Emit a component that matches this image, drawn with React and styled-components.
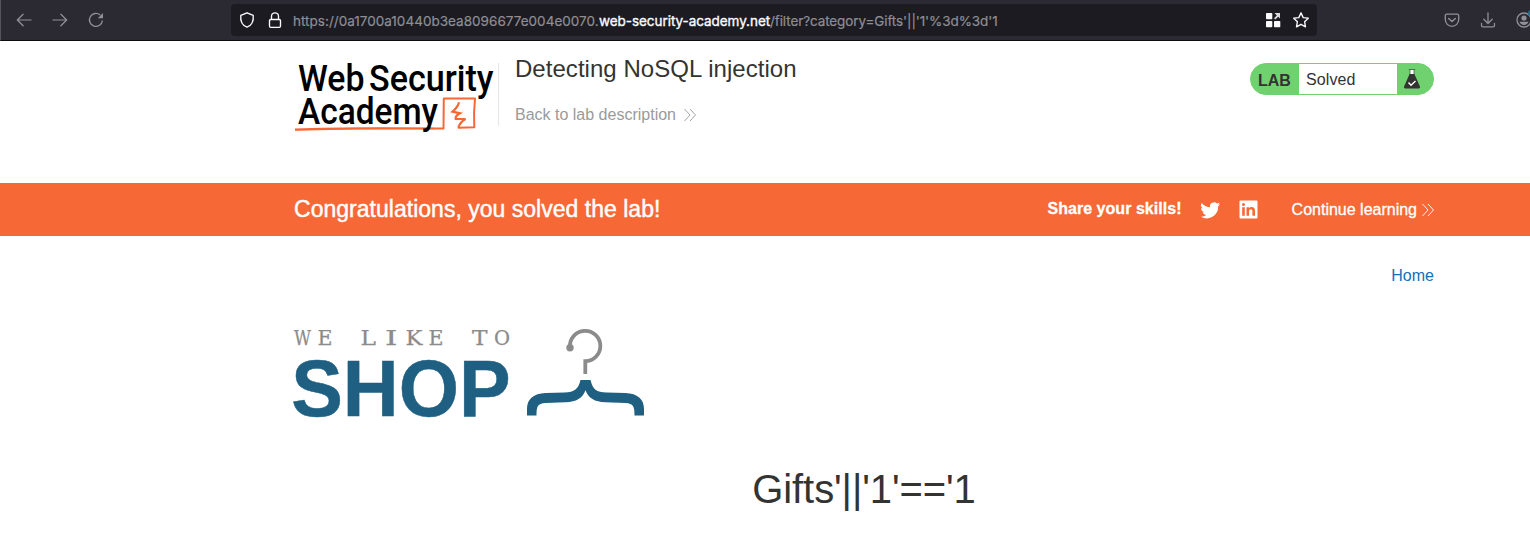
import React from "react";
import styled, { createGlobalStyle } from "styled-components";

const Global = createGlobalStyle`
  * { box-sizing: border-box; }
  body { margin: 0; background: #fff; color: #333332; font: 16px "Liberation Sans", Arial, sans-serif; overflow: hidden; }
  svg { display: block; flex: none; overflow: visible; }
`;

const Page = styled.div`height: 537px; overflow: hidden;`;

const Toolbar = styled.div`
  display: flex;
  align-items: center;
  height: 41px;
  background: #2b2a33;
  border-bottom: 1px solid #0c0c0d;
  border-left: 1px solid #56555c;
  overflow: hidden;
`;
const NavButtons = styled.div`
  display: flex;
  flex: none;
  gap: 20px;
  width: 230px;
  padding-left: 15px;
  color: #919096;
`;
const AddressBar = styled.div`
  display: flex;
  flex: none;
  align-items: center;
  width: 1086px;
  height: 32px;
  padding: 0 8px;
  border-radius: 4px;
  background: #1c1b22;
  color: #fbfbfe;
`;
const AddressIcons = styled.div`
  display: flex;
  gap: ${(p) => p.$gap}px;
`;
const Url = styled.div`
  flex: 1;
  display: flex;
  padding: 1px 0 0 10px;
  font: 13.5px/18px Inter, sans-serif;
  white-space: pre;
  color: #8f8e94;
`;
const UrlPart = styled.span`
  width: ${(p) => p.$width}px;
  letter-spacing: ${(p) => p.$spacing || 0}px;
  color: ${(p) => (p.$host ? "#fbfbfe" : "inherit")};
  -webkit-text-stroke: ${(p) => (p.$host ? "0.35px" : "0.2px")} currentColor;
`;
const Tools = styled.div`
  display: flex;
  flex: none;
  gap: 20px;
  padding-left: 127px;
  color: #919096;
`;

const Container = styled.div`
  width: 1140px;
  margin-left: 294px;
`;
const LabHeader = styled(Container)`
  display: flex;
  height: 142px;
  padding-top: 22px;
`;
const TitleBlock = styled.div`
  flex: 1;
  height: 63px;
  margin-left: 4px;
  padding-left: 16px;
  border-left: 1px solid #e6e6e6;
`;
const Title = styled.h2`
  margin: -9px 0 0;
  font-size: 24px;
  line-height: 30px;
  font-weight: 400;
  letter-spacing: 0.04px;
`;
const BackLink = styled.a`
  display: flex;
  align-items: center;
  gap: 8px;
  margin-top: 21px;
  line-height: 20px;
  color: #9a9a9a;
`;
const Status = styled.div`
  display: flex;
  width: 184px;
  height: 32px;
  border: 1px solid #70d26e;
  border-radius: 16px;
  background: #70d26e;
  line-height: 32px;
  overflow: hidden;
`;
const StatusLabel = styled.b`
  width: 48px;
  padding: 1px 0 0 7px;
`;
const StatusText = styled.span`
  width: 98px;
  padding-left: 7px;
  letter-spacing: 0.1px;
  background: #fff;
`;
const StatusIcon = styled.span`padding: 4px 0 0 6px;`;

const Banner = styled.div`
  height: 53px;
  background: #f66836;
  color: #fff;
`;
const BannerRow = styled(Container)`
  display: flex;
  align-items: center;
  height: 53px;
`;
const Congrats = styled.h4`
  flex: 1;
  margin: 0;
  font-size: 23px;
  font-weight: 400;
  letter-spacing: 0.02px;
  -webkit-text-stroke: 0.45px #fff;
`;
const Share = styled.b`
  margin-right: 18px;
  padding-bottom: 2px;
  letter-spacing: 0.04px;
  -webkit-text-stroke: 0.3px #fff;
`;
const Social = styled.div`
  display: flex;
  gap: 18px;
  margin-right: 34px;
`;
const Continue = styled.a`
  display: flex;
  align-items: center;
  gap: 5px;
  -webkit-text-stroke: 0.3px #fff;
`;
const TopLinks = styled(Container)`
  display: flex;
  justify-content: flex-end;
  height: 90px;
  padding-top: 30px;
  line-height: 20px;
  color: #1470b8;
`;
const Category = styled.h1`
  margin: 38px 0 0;
  text-align: center;
  font-size: 40px;
  line-height: 50px;
  font-weight: 400;
  letter-spacing: -0.09px;
`;

const Line = ({ children, size = 18, w = 1.4 }) => (
  <svg width={size} height={size} viewBox="0 0 18 18" fill="none" stroke="currentColor" strokeWidth={w} strokeLinecap="round" strokeLinejoin="round">
    {children}
  </svg>
);

const Chevrons = () => (
  <svg width="12" height="14" viewBox="0 0 12 14" fill="none" stroke="currentColor" strokeWidth="0.9">
    <path d="M.5 1 6 7 .5 13M6 1l5.500 6L6 13" />
  </svg>
);

const AcademyLogo = () => (
  <svg width="200" height="70" viewBox="0 0 200 70">
    <g fill="none" stroke="#f66836">
      <path d="M1 66.500C35 65 95 65 149.500 65.500L149.800 35.500 181 35.500Q179.500 50 180.300 64.300L164 64.700" strokeWidth="2" strokeLinejoin="round" />
      <path d="M1 67 60 65.600 140 65.500" strokeWidth="1.600" />
      <path d="M165 39.300Q164 44 158.500 48.700L166 50.300Q161 53 161.700 56H171.500Q166 59 164.300 64.700" strokeWidth="2.200" />
    </g>
    <g fontFamily="Roboto" fontWeight="500" fontSize="36.500" fill="#000">
      <text x="4" y="28.300" textLength="66.500" lengthAdjust="spacingAndGlyphs">Web</text>
      <text x="75" y="28.300" textLength="124.500" lengthAdjust="spacingAndGlyphs">Security</text>
      <text x="4" y="61" textLength="140" lengthAdjust="spacingAndGlyphs">Academy</text>
    </g>
  </svg>
);

/* Tagline letters: glyph, left edge, advance width */
const TAGLINE = [
  ["W", 0, 17], ["E", 23.5, 15], ["L", 66.5, 15.5], ["I", 91, 12.5],
  ["K", 111.5, 17], ["E", 134.5, 15], ["T", 178, 15.5], ["O", 200, 16],
];

const ShopLogo = () => (
  <svg width="352" height="100" viewBox="0 0 352 100">
    <g fontFamily="'DejaVu Serif', 'Liberation Serif', serif" fontSize="20.500" fill="#8b8b8b" stroke="#8b8b8b" strokeWidth=".25">
      {TAGLINE.map(([glyph, x, width]) => (
        <text key={x} x={x} y="19" textLength={width} lengthAdjust="spacingAndGlyphs">{glyph}</text>
      ))}
    </g>
    <text x="-2.800" y="89.500" fontFamily="Liberation Sans" fontWeight="700" fontSize="80.500" fill="#1f5f82" stroke="#1f5f82" strokeWidth=".5" textLength="219.500" lengthAdjust="spacingAndGlyphs">SHOP</text>
    <circle cx="276" cy="21.800" r="3.700" fill="#8b8b8b" />
    <path d="M276 21.500A15.200 15.200 0 1 1 291.300 35.200V48" fill="none" stroke="#8b8b8b" strokeWidth="3.800" />
    <path d="M286.500 54h10c2 9 6 12.500 16 12.500l19 .6c12 .5 18.500 6 18.500 16V89.500h-9.500c0-9-1-12-9-12.500l-20-.7c-11-.4-17-4-20-12-3 8-9 11.600-20 12l-20 .7c-8 .5-9 3.500-9 12.500H233V83c0-10 6.500-15.500 18.500-16l19-.6c10 0 14-3.500 16-12.400Z" fill="#1f5f82" />
  </svg>
);

export default function App() {
  return (
    <Page>
      <Global />
      <Toolbar>
        <NavButtons>
          <Line size={16}><path d="M17 9H2M8 2.500 1.500 9 8 15.500" /></Line>
          <Line size={16}><path d="M1 9h15M10 2.500 16.500 9 10 15.500" /></Line>
          <svg width="16" height="16" viewBox="0 0 16 16" fill="none" stroke="currentColor" strokeWidth="1.300">
            <path d="M12.200 3A6.500 6.500 0 1 0 14.400 8.500" />
            <path d="M15 1v5.200H9.800Z" fill="currentColor" stroke="none" />
          </svg>
        </NavButtons>
        <AddressBar>
          <AddressIcons $gap={12}>
            <svg width="16" height="16" viewBox="0 0 16 16" fill="none" stroke="currentColor" strokeWidth="1.350" strokeLinejoin="round">
              <path d="M8 .8 14.200 3.400C14.800 9 12.500 13.500 8 15.200 3.500 13.500 1.200 9 1.800 3.400Z" />
            </svg>
            <svg width="16" height="16" viewBox="0 0 16 16" fill="none" stroke="currentColor" strokeWidth="1.350">
              <rect x="2.500" y="7.500" width="11" height="7.800" rx="1.300" />
              <path d="M4.500 7.500V4.300a3.500 3.500 0 0 1 7 0V7.500" />
            </svg>
          </AddressIcons>
          <Url>
            <UrlPart $width={306} $spacing={0.02}>https://0a1700a10440b3ea8096677e004e0070.</UrlPart>
            <UrlPart $width={171} $spacing={-0.05} $host>web-security-academy.net</UrlPart>
            <UrlPart $width={228} $spacing={-0.1}>/filter?category=Gifts'||'1'%3d%3d'1</UrlPart>
          </Url>
          <AddressIcons $gap={12}>
            <svg width="16" height="16" viewBox="0 0 16 16" fill="currentColor">
              <rect x="1" y="1" width="6.300" height="6.300" rx=".8" />
              <rect x="1" y="9" width="6.300" height="6.300" rx=".8" />
              <rect x="9" y="9" width="6.300" height="6.300" rx=".8" />
              <path d="M9.500 1H15v5.500L13.300 4.800 10.300 7.600 9 6.300 11.800 3.400Z" opacity=".85" />
            </svg>
            <svg width="16" height="16" viewBox="0 0 16 16" fill="none" stroke="currentColor" strokeWidth="1.350" strokeLinejoin="round">
              <path d="m8 .9 2.200 4.700 5.100.6-3.700 3.500.9 5.100L8 12.300l-4.500 2.500.9-5.100L.7 6.200l5.100-.6Z" />
            </svg>
          </AddressIcons>
        </AddressBar>
        <Tools>
          <svg width="16" height="16" viewBox="0 0 16 16" fill="none" stroke="currentColor" strokeWidth="1.300" strokeLinecap="round" strokeLinejoin="round">
            <path d="M2.700 2.200h10.600q1.400 0 1.400 1.400v4a6.700 6.700 0 0 1-13.400 0v-4q0-1.400 1.400-1.400Z" />
            <path d="m4.700 6.500 3.300 3 3.300-3" strokeWidth="1.500" />
          </svg>
          <svg width="16" height="16" viewBox="0 0 16 16" fill="none" stroke="currentColor" strokeWidth="1.300" strokeLinecap="round" strokeLinejoin="round">
            <path d="M8 .8v10.500M3.800 7.300 8 11.500l4.200-4.200M1.500 11.500v2q0 1.300 1.300 1.300h10.400q1.300 0 1.300-1.300v-2" />
          </svg>
          <svg width="16" height="16" viewBox="0 0 16 16" fill="currentColor">
            <circle cx="8" cy="8" r="7" fill="none" stroke="currentColor" strokeWidth="1.300" />
            <circle cx="8" cy="6" r="2.600" />
            <path d="M3.500 9.800h9c-.6 2-2.200 3.200-4.500 3.200s-3.900-1.200-4.500-3.200Z" />
            <circle cx="15" cy="1" r="3" fill="#1b6f8c" />
          </svg>
        </Tools>
      </Toolbar>

      <LabHeader>
        <AcademyLogo />
        <TitleBlock>
          <Title>Detecting NoSQL injection</Title>
          <BackLink>Back to lab description <Chevrons /></BackLink>
        </TitleBlock>
        <Status>
          <StatusLabel>LAB</StatusLabel>
          <StatusText>Solved</StatusText>
          <StatusIcon>
            <svg width="18" height="22" viewBox="0 0 18 22">
              <path d="M7 2h4v5H7Z" fill="#fff" />
              <path d="M5.800 1.500H12.200M7 2v5M11 2v5" stroke="#333332" strokeWidth=".6" />
              <path d="M6.600 6h4.800l5.500 12.500q.6 2-1.200 2H2.300Q.5 20.500 1.100 18.500Z" fill="#333332" />
              <path d="m5.500 14.500 2.500 2.700 4.500-4.200" stroke="#fff" strokeWidth="1.400" fill="none" />
            </svg>
          </StatusIcon>
        </Status>
      </LabHeader>

      <Banner>
        <BannerRow>
          <Congrats>Congratulations, you solved the lab!</Congrats>
          <Share>Share your skills!</Share>
          <Social>
            <svg width="21" height="20" viewBox="0 0 24 24" fill="#fff">
              <path d="M23.600 4.900a9.500 9.500 0 0 1-2.800.8 4.900 4.900 0 0 0 2.100-2.700 9.700 9.700 0 0 1-3.100 1.200 4.900 4.900 0 0 0-8.300 4.500A13.900 13.900 0 0 1 1.400 3.500a4.900 4.900 0 0 0 1.500 6.600 4.900 4.900 0 0 1-2.200-.6 4.900 4.900 0 0 0 3.900 4.900 5 5 0 0 1-2.200.1 4.900 4.900 0 0 0 4.600 3.400A9.900 9.900 0 0 1 0 19.900a13.900 13.900 0 0 0 21.200-12.400 10 10 0 0 0 2.400-2.600Z" />
            </svg>
            <svg width="19" height="19" viewBox="0 0 19 19">
              <rect x=".5" y=".5" width="18" height="18" rx="1" fill="#fff" />
              <path d="M3.200 7.300h2.600v8.500H3.200ZM7.500 7.300H10v1.200c1.300-2.200 6-2 6 2.200v5.100h-2.600v-4.600c0-2.800-3.300-2.500-3.300 0v4.600H7.500Z" fill="#f66836" />
              <circle cx="4.500" cy="4.600" r="1.500" fill="#f66836" />
            </svg>
          </Social>
          <Continue>Continue learning <Chevrons /></Continue>
        </BannerRow>
      </Banner>

      <TopLinks>Home</TopLinks>
      <Container>
        <ShopLogo />
        <Category>Gifts'||'1'=='1</Category>
      </Container>
    </Page>
  );
}
